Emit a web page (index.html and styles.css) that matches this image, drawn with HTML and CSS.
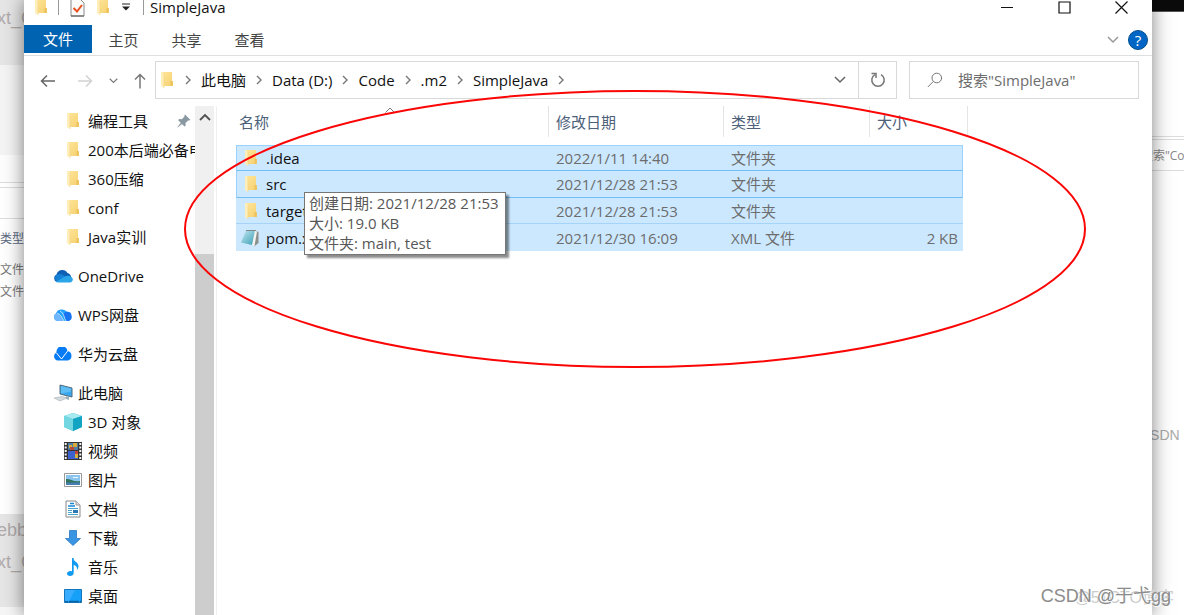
FILE: index.html
```html
<!DOCTYPE html>
<html lang="zh-CN">
<head>
<meta charset="utf-8">
<meta name="viewport" content="width=device-width, initial-scale=1">
<title>SimpleJava</title>
<link rel="stylesheet" href="styles.css">
</head>
<body>
<svg class="sprite" aria-hidden="true">
  <defs>
    <linearGradient id="gold" x1="0" x2="1" y1="0" y2="1"><stop offset="0" stop-color="#ffe69a"/><stop offset="1" stop-color="#f5d070"/></linearGradient>
    <linearGradient id="sky" x1="0" x2="1" y1="0" y2="1"><stop offset="0" stop-color="#2b98ff"/><stop offset="1" stop-color="#16b0fb"/></linearGradient>
    <linearGradient id="note" x1="0" x2="1" y1="0" y2="1"><stop offset="0" stop-color="#c4e8f0"/><stop offset="1" stop-color="#3a9fb8"/></linearGradient>
    <symbol id="folder" viewBox="0 0 12 16"><path d="M1 0h10v9h.800v5H2z" fill="url(#gold)"/><path d="M9.500 9h2.300v5H9.500z" fill="#edc25c"/><path d="M0 0l3 1.500V16l-3-2z" fill="#ffeeb8"/><path d="M3 2v14" stroke="#efd084" stroke-width=".6"/></symbol>
    <symbol id="chev-r" viewBox="0 0 6 10"><path d="M1 1l4 4-4 4" fill="none" stroke="currentColor" stroke-width="1.400"/></symbol>
    <symbol id="chev-d" viewBox="0 0 12 8"><path d="M1 1l5 5 5-5" fill="none" stroke="currentColor" stroke-width="1.500"/></symbol>
  </defs>
</svg>

<div class="desktop">
  <aside class="strip strip-left" aria-hidden="true">
    <div class="code-block code-top">xt_C</div>
    <div class="band band-gray"></div>
    <div class="band band-light"></div>
    <div class="band band-line"></div>
    <div class="band band-path"></div>
    <div class="strip-heading">类型</div>
    <div class="strip-cell">文件</div>
    <div class="strip-cell">文件</div>
    <div class="band band-blank"></div>
    <div class="code-block code-bottom"><span>ebb</span><span>xt_C</span></div>
    <div class="band band-rest"></div>
  </aside>

  <main class="window">
    <header class="titlebar">
      <div class="quick">
        <svg width="12" height="16"><use href="#folder"/></svg>
        <i class="rule"></i>
        <button class="plain" aria-label="属性"><svg width="16" height="19" viewBox="0 0 16 19"><path d="M1 1h9l4 4v13H1z" fill="#fbfbfb" stroke="#8a8a8a"/><path d="M1 18h13" stroke="#555"/><path d="M3.500 10l3.500 3.500L12 7" fill="none" stroke="#e8501e" stroke-width="2"/></svg></button>
        <button class="plain" aria-label="新建文件夹"><svg width="12" height="16"><use href="#folder"/></svg></button>
        <button class="plain quick-more" aria-label="自定义"><svg width="8" height="8" viewBox="0 0 8 8"><path d="M0 1h8" stroke="#222"/><path d="M0 3.500h8L4 7.500z" fill="#222"/></svg></button>
        <i class="rule"></i>
      </div>
      <h1 class="title">SimpleJava</h1>
      <div class="controls">
        <button aria-label="最小化"><svg width="13" height="13"><path d="M0 6.500h12" stroke="#111"/></svg></button>
        <button aria-label="最大化"><svg width="13" height="13"><path d="M1 1h11v11H1z" fill="none" stroke="#111" stroke-width="1.200"/></svg></button>
        <button aria-label="关闭"><svg width="13" height="13"><path d="M.5.5l12 12M12.500.5l-12 12" stroke="#111" stroke-width="1.200"/></svg></button>
      </div>
    </header>

    <nav class="ribbon">
      <button class="tab tab-file">文件</button>
      <button class="tab">主页</button>
      <button class="tab">共享</button>
      <button class="tab">查看</button>
      <div class="ribbon-end">
        <button class="plain expand" aria-label="展开功能区"><svg width="12" height="8"><use href="#chev-d"/></svg></button>
        <button class="help" aria-label="帮助">?</button>
      </div>
    </nav>

    <div class="toolbar">
      <div class="history">
        <button class="plain" aria-label="后退"><svg width="16" height="14" viewBox="0 0 16 14"><path d="M15 7H1.500M7 1.500L1.500 7 7 12.500" fill="none" stroke="#666" stroke-width="1.500"/></svg></button>
        <button class="plain" aria-label="前进"><svg width="16" height="14" viewBox="0 0 16 14"><path d="M1 7h13.500M9 1.500L14.500 7 9 12.500" fill="none" stroke="#d2d2d2" stroke-width="1.500"/></svg></button>
        <button class="plain recent" aria-label="最近浏览的位置"><svg width="9" height="6"><use href="#chev-d"/></svg></button>
        <button class="plain" aria-label="上移"><svg width="12" height="16" viewBox="0 0 12 16"><path d="M6 15.500V1.500M1 6.500l5-5 5 5" fill="none" stroke="#777" stroke-width="1.500"/></svg></button>
      </div>
      <div class="address">
        <svg width="12" height="16"><use href="#folder"/></svg>
        <nav class="crumbs">
          <svg width="6" height="10"><use href="#chev-r"/></svg><a href="#">此电脑</a>
          <svg width="6" height="10"><use href="#chev-r"/></svg><a href="#">Data (D:)</a>
          <svg width="6" height="10"><use href="#chev-r"/></svg><a href="#">Code</a>
          <svg width="6" height="10"><use href="#chev-r"/></svg><a href="#">.m2</a>
          <svg width="6" height="10"><use href="#chev-r"/></svg><a href="#">SimpleJava</a>
          <svg width="6" height="10"><use href="#chev-r"/></svg>
        </nav>
        <button class="plain addr-btn" aria-label="历史记录"><svg width="12" height="8"><use href="#chev-d"/></svg></button>
        <button class="plain addr-btn refresh" aria-label="刷新"><svg width="16" height="16" viewBox="0 0 16 16"><path d="M11 2.600A6.200 6.200 0 1 1 5 2.600" fill="none" stroke="#777" stroke-width="1.500"/><path d="M1.500 1.500h4.500v4.500" fill="none" stroke="#777" stroke-width="1.500"/></svg></button>
      </div>
      <label class="search">
        <svg width="16" height="16" viewBox="0 0 16 16"><circle cx="9.800" cy="6" r="4.800" fill="none" stroke="#777"/><path d="M6.300 9.500L.8 15" stroke="#777"/></svg>
        <input type="text" aria-label="搜索" placeholder="搜索&quot;SimpleJava&quot;">
      </label>
    </div>

    <div class="body">
      <nav class="tree">
        <ul class="group sub">
          <li><a href="#"><span class="ico"><svg width="12" height="16"><use href="#folder"/></svg></span>编程工具<svg class="pin" width="14" height="14" viewBox="0 0 14 14"><path d="M8 .5l5.500 5.500-1.500.6-.9-.2-2.600 2.600.2 2.500-1.200 1L5 10 .8 13.400.5 13l3.300-4.200L1.200 6.200l1-1.200 2.600.2 2.700-2.600-.2-.9z" fill="#8a98a2"/></svg></a></li>
          <li><a href="#"><span class="ico"><svg width="12" height="16"><use href="#folder"/></svg></span>200本后端必备电子书</a></li>
          <li><a href="#"><span class="ico"><svg width="12" height="16"><use href="#folder"/></svg></span>360压缩</a></li>
          <li><a href="#"><span class="ico"><svg width="12" height="16"><use href="#folder"/></svg></span>conf</a></li>
          <li><a href="#"><span class="ico"><svg width="12" height="16"><use href="#folder"/></svg></span>Java实训</a></li>
        </ul>
        <ul class="group">
          <li><a href="#"><span class="ico"><svg width="20" height="14" viewBox="0 0 20 14"><path d="M4 13a4 4 0 0 1-.5-7.500A6 6 0 0 1 14.500 4 5 5 0 0 1 16 13z" fill="#0f5fb5"/><path d="M4 5.500C8 4 11 6 13 8l5 4.500H4A4 4 0 0 1 4 5.500z" fill="#1480d6"/><path d="M3 12.800L12 7.500c3-1.800 7-.5 7.800 2.500.4 1.800-1 3.500-3 3.500H5c-.8 0-1.500-.3-2-.7z" fill="#2ba4e8"/></svg></span>OneDrive</a></li>
        </ul>
        <ul class="group">
          <li><a href="#"><span class="ico"><svg width="20" height="14" viewBox="0 0 20 14"><path d="M5 13a4 4 0 0 1-2-7.500A6 5.500 0 0 1 13.500 3.500 5 5 0 0 1 15 13z" fill="url(#sky)"/><path d="M2 6c4-1.500 7 3 8.500 7H5A4.200 4.200 0 0 1 2 6z" fill="#70b7ff"/><path d="M10.500 8a4 4 0 0 1 8-.5c1 3-1 5.500-3.500 5.500h-2z" fill="#1974f2"/><path d="M4 5.500c4 .5 5 4.500 7 7.500M7 3c4 2 4 7 6 10" fill="none" stroke="#e2f1ff" stroke-width=".8"/></svg></span>WPS网盘</a></li>
        </ul>
        <ul class="group">
          <li><a href="#"><span class="ico"><svg width="20" height="14" viewBox="0 0 20 14"><path d="M5 13.500a4.200 4.200 0 0 1-1.500-8A5.500 5.500 0 0 1 14.500 4a4.900 4.900 0 0 1 .5 9.500z" fill="#087cf5"/><path d="M3.500 6l5 6L15 3.500" fill="none" stroke="#fff" stroke-width="1"/></svg></span>华为云盘</a></li>
        </ul>
        <ul class="group">
          <li><a href="#"><span class="ico"><svg width="20" height="18" viewBox="0 0 20 18"><path d="M7 1l12 3v9L7 10z" fill="#3aa8ef" stroke="#526b7a"/><path d="M8 2l10 2.500v3L8 9.400z" fill="#5fbdf6"/><path d="M13 12v3l3 1v-3z" fill="#9fb0ba"/><path d="M1 14l8-1.500 5 1.500-7 3z" fill="#d4dadd" stroke="#a6b0b5" stroke-width=".6"/></svg></span>此电脑</a>
            <ul class="sub">
              <li><a href="#"><span class="ico"><svg width="18" height="18" viewBox="0 0 18 18"><path d="M0 3l9-3 9 3v11l-9 4-9-4z" fill="#38bdd2"/><path d="M0 3l9-3 9 3-9 3z" fill="#a6eaf0"/><path d="M0 3l9 3v12l-9-4z" fill="#73d7e2"/><path d="M9 6l9-3v11l-9 4z" fill="#13a4c3"/></svg></span>3D 对象</a></li>
              <li><a href="#"><span class="ico"><svg width="18" height="18" viewBox="0 0 18 18"><path d="M0 0h18v18H0z" fill="#333"/><path d="M4 1h10v7H4z" fill="#4e7da8"/><path d="M4 9h10v8H4z" fill="#3c62ce"/><path d="M5 3h3v3H5zM9 1h4v4H9z" fill="#d8ab3b"/><path d="M6 5h4v3H6z" fill="#b64a3a"/><path d="M11 9h3v3h-3z" fill="#c5423c"/><path d="M11 12h3v4h-3z" fill="#d6b13c"/><path d="M1.700 1v17M16.300 1v17" stroke="#f5f5f5" stroke-width="2" stroke-dasharray="2 1.500"/></svg></span>视频</a></li>
              <li><a href="#"><span class="ico"><svg width="18" height="14" viewBox="0 0 18 14"><path d="M.5.5h17v13H.5z" fill="#fff" stroke="#999"/><path d="M2 2h14v10H2z" fill="#8bc4ef"/><path d="M2 6c4-.5 7 3 14 2v2H2z" fill="#31745e"/><path d="M2 9.500h14V12H2z" fill="#477db0"/><path d="M9 4h5v1H9z" fill="#edf8ff"/></svg></span>图片</a></li>
              <li><a href="#"><span class="ico"><svg width="16" height="18" viewBox="0 0 16 18"><path d="M1 1h10l4 4v12H1z" fill="#fff" stroke="#888"/><path d="M11 1v4h4" fill="#ddd" stroke="#999"/><path d="M5 3.500h4M3 6h7" stroke="#1686d9" stroke-width="1.500"/><path d="M3 8.500h10M3 10.500h4M3 12.500h4M3 14.500h10" stroke="#4ba8cc"/><path d="M8 10h5v3H8z" fill="#2d7ab5"/></svg></span>文档</a></li>
              <li><a href="#"><span class="ico"><svg width="16" height="16" viewBox="0 0 16 16"><path d="M4.500.5h7v8h4L8 15.500.5 8.500h4z" fill="#3994e2" stroke="#2879c4" stroke-width=".8"/></svg></span>下载</a></li>
              <li><a href="#"><span class="ico"><svg width="12" height="18" viewBox="0 0 12 18"><path d="M5 0h1.500c0 4 5 4 5 8 0 1.500-.5 2.500-1.500 4 .3-3-1-4.500-3.300-5v8c0 2-1.700 3-3.700 3-1.800 0-3-1-3-2.500S1.500 13 3.500 13L5 13.200z" fill="#109bf1"/></svg></span>音乐</a></li>
              <li><a href="#"><span class="ico"><svg width="18" height="14" viewBox="0 0 18 14"><path d="M.5.5h17v13H.5z" fill="#16a0f8" stroke="#1576bd"/><path d="M1 12.500h16" stroke="#0b64a8" stroke-width="1.500" stroke-dasharray="3 1 10 1"/><path d="M1 1h10L5 12H1z" fill="#38adff"/></svg></span>桌面</a></li>
            </ul>
          </li>
        </ul>
      </nav>
      <div class="scrollbar" aria-hidden="true">
        <svg width="12" height="8" viewBox="0 0 12 8"><path d="M1 7l5-5 5 5" fill="none" stroke="#505050" stroke-width="1.800"/></svg>
        <div class="thumb"></div>
      </div>

      <section class="pane">
        <table class="files">
          <colgroup><col class="c-name"><col class="c-date"><col class="c-type"><col class="c-size"><col class="c-edge"></colgroup>
          <thead>
            <tr><th>名称<svg class="sort" width="10" height="6" viewBox="0 0 10 6"><path d="M.5 5.500L5 1l4.500 4.500" fill="none" stroke="#777"/></svg></th><th>修改日期</th><th>类型</th><th colspan="2">大小</th></tr>
          </thead>
          <tbody>
            <tr class="picked"><td><span class="name"><svg width="12" height="16"><use href="#folder"/></svg>.idea</span></td><td>2022/1/11 14:40</td><td>文件夹</td><td></td></tr>
            <tr class="picked tall"><td><span class="name"><svg width="12" height="16"><use href="#folder"/></svg>src</span></td><td>2021/12/28 21:53</td><td>文件夹</td><td></td></tr>
            <tr><td><span class="name"><svg width="12" height="16"><use href="#folder"/></svg>target</span></td><td>2021/12/28 21:53</td><td>文件夹</td><td></td></tr>
            <tr class="last tall"><td><span class="name file"><svg width="18" height="18" viewBox="0 0 18 18"><path d="M14 1.500l3.500 1.500v11L13 17.500z" fill="#8b8f8c"/><path d="M13 1.500l3 1-2.500 14.500L10 15.500z" fill="#f4f4ee"/><path d="M5 1.500h9L11 16 0 13.500z" fill="url(#note)"/><path d="M5 1.500h10" stroke="#7d8a8c"/></svg>pom.xml</span></td><td>2021/12/30 16:09</td><td>XML 文件</td><td>2 KB</td></tr>
          </tbody>
        </table>
        <div class="tooltip" role="tooltip">
          <div>创建日期: 2021/12/28 21:53</div>
          <div>大小: 19.0 KB</div>
          <div>文件夹: main, test</div>
        </div>
      </section>
    </div>
  </main>

  <aside class="strip strip-right" aria-hidden="true">
    <div class="black"></div>
    <div class="gap-top"></div>
    <div class="behind-search">搜索"Co</div>
    <div class="behind-mark">CSDN @</div>
  </aside>

  <svg class="annotation" width="904" height="282" viewBox="0 0 904 282" aria-hidden="true"><ellipse cx="452" cy="141" rx="450" ry="138" fill="none" stroke="#fb0505" stroke-width="2"/></svg>
  <div class="mark mark-back">@51CTO博客</div>
  <div class="mark mark-front">CSDN @于弋gg</div>
</div>
</body>
</html>
```
FILE: styles.css
```css
* { box-sizing: border-box; }
body {
  margin: 0;
  font: 15px/20px "Open Sans", "Noto Sans CJK SC", sans-serif;
  color: #111;
  background: #fff;
}
svg { display: block; flex: none; }
button { font: inherit; color: inherit; border: 0; background: none; padding: 0; }
a { color: inherit; text-decoration: none; }
ul { list-style: none; margin: 0; padding: 0; }
.sprite { position: absolute; width: 0; height: 0; }
.plain { display: flex; align-items: center; justify-content: center; }

.desktop {
  position: relative;
  display: grid;
  grid-template-columns: 24px minmax(0, 1fr) 32px;
  height: 100vh;
  overflow: hidden;
}

/* Windows behind the explorer */
.strip { display: flex; flex-direction: column; overflow: hidden; white-space: nowrap; min-height: 0; }
.strip > * { flex: none; }
.code-block { background: #e6e6e6; color: #b2acac; font: 18px/32px "Liberation Sans", sans-serif; text-indent: -3px; }
.code-top { height: 65px; padding-top: 2px; }
.band-gray { height: 90px; background: #f4f4f4; }
.band-light { height: 28px; background: #fdfdfd; border-bottom: 1px solid #ddd; }
.band-line { height: 5px; border-bottom: 1px solid #ddd; }
.band-path { height: 31px; border-bottom: 1px solid #ddd; }
.strip-heading, .strip-cell { font-size: 12px; line-height: 22px; color: #777; }
.strip-heading { line-height: 40px; color: #5d6b84; }
.band-blank { height: 211px; }
.code-block.code-bottom { display: flex; flex-direction: column; height: 93px; }
.band-rest { height: 8px; background: #f6f6f6; }
.black { height: 12px; background: #0b0b0b; border-bottom: 1px solid #555; }
.gap-top { height: 128px; border-bottom: 4px double #ddd; }
.behind-search { height: 31px; border-bottom: 1px solid #ddd; font-size: 12px; line-height: 31px; color: #888; text-indent: -11px; }
.behind-mark { margin-top: 253px; font: 14px/22px "Liberation Sans", sans-serif; color: #aaa; text-indent: -12px; }

/* Explorer window */
.window {
  position: relative;
  display: flex;
  flex-direction: column;
  min-height: 0;
  background: #fff;
  box-shadow: 0 0 18px rgba(0, 0, 0, .5);
}
.titlebar { display: flex; align-items: center; height: 25px; padding-bottom: 11px; }
.quick { display: flex; align-items: center; padding-left: 11px; gap: 11px; }
.rule { width: 1px; height: 16px; background: #999; }
.quick-more { width: 12px; }
.title { margin: 0 0 0 6px; font-size: 15px; line-height: 16px; font-weight: 400; }
.controls { display: flex; margin-left: auto; padding-right: 2px; }
.controls button { display: flex; justify-content: center; width: 57px; }

.ribbon { display: flex; height: 31px; border-bottom: 1px solid #dfdfdf; color: #444; }
.tab { width: 63px; height: 30px; }
.tab-file { width: 68px; height: 28px; background: #0063b1; color: #fff; }
.ribbon-end { display: flex; align-items: center; gap: 9px; margin-left: auto; padding-right: 4px; }
.expand { color: #999; }
.help { width: 20px; height: 20px; border-radius: 50%; background: #0066c5; border: 1px solid #00508f; color: #fff; line-height: 18px; }

.toolbar { display: flex; align-items: center; height: 50px; padding: 0 13px 2px 16px; color: #666; }
.history { display: flex; align-items: center; gap: 16px; width: 115px; flex: none; padding-top: 2px; }
.history button:first-child { margin-right: 5px; }
.history .recent { color: #777; }
.address { display: flex; align-items: center; flex: 1; min-width: 0; height: 38px; border: 1px solid #d9d9d9; padding-left: 5px; }
.crumbs { display: flex; align-items: center; gap: 10px; margin-left: 12px; color: #777; white-space: nowrap; overflow: hidden; }
.crumbs a { color: #111; }
.addr-btn { width: 36px; height: 36px; margin-left: auto; flex: none; }
.refresh { width: 38px; margin-left: 0; border-left: 1px solid #d9d9d9; }
.search { display: flex; align-items: center; gap: 15px; width: 230px; height: 38px; margin-left: 12px; padding: 0 17px; border: 1px solid #d9d9d9; }
.search input { flex: 1; min-width: 0; border: 0; padding: 0; outline: 0; font: inherit; background: none; }
.search input::placeholder { color: #6d6d6d; opacity: 1; }

.body { display: flex; flex: 1; min-height: 0; }
.tree { width: 171px; flex: none; overflow: hidden; }
.group + .group { margin-top: 10px; }
.tree a { display: flex; align-items: center; gap: 5px; height: 29px; padding-left: 29px; white-space: nowrap; }
.tree .sub a { padding-left: 39px; }
.ico { display: flex; justify-content: center; width: 20px; flex: none; }
.pin { margin-left: auto; margin-right: 4px; }
.scrollbar { display: flex; flex-direction: column; align-items: center; width: 19px; flex: none; padding-top: 7px; background: #f0f0f0; }
.thumb { flex: 1; width: 100%; margin-top: 133px; background: #cdcdcd; }

.pane { position: relative; flex: 1; min-width: 0; margin-left: 2px; padding-left: 19px; border-left: 1px solid #f0f0f0; }
.files { table-layout: fixed; width: 732px; border-collapse: separate; border-spacing: 0; color: #6d6d6d; }
.c-name { width: 313px; }
.c-date { width: 175px; }
.c-type { width: 146px; }
.c-size { width: 93px; }
.c-edge { width: 5px; }
.files th { position: relative; height: 31px; padding: 0 7px; border-right: 1px solid #e5e5e5; font-weight: 400; text-align: left; color: #4c607a; }
.files th:first-child { padding-left: 3px; }
.sort { position: absolute; top: 1px; left: 149px; }
.files tbody::before { content: ""; display: table-row; height: 8px; }
.files td { height: 26px; padding: 0 7px; background: #cce8ff; line-height: 20px; border-bottom: 1px solid #a6d3f8; }
.files td:nth-child(4) { padding-right: 5px; text-align: right; }
.files .picked td { border-bottom-color: #72bdf5; }
.files .picked td:first-child { border-left: 1px solid #99d1ff; padding-left: 8px; }
.files .picked td:nth-child(4) { border-right: 1px solid #99d1ff; }
.files .picked:first-child td { border-top: 1px solid #99d1ff; }
.files .tall td { height: 27px; }
.files .last td { border-bottom: 0; }
.files td:first-child { padding-left: 9px; }
.name { display: flex; align-items: center; gap: 9px; color: #111; }
.files .last td:first-child { padding-left: 5px; }
.name.file { gap: 7px; }

.tooltip {
  position: absolute;
  top: 86px;
  left: 87px;
  padding: 0 6px 1px 4px;
  border: 1px solid #767676;
  background: #fff;
  color: #575757;
  box-shadow: 3px 3px 2px rgba(0, 0, 0, .45);
  white-space: nowrap;
}

/* Overlays */
.annotation { position: absolute; top: 88px; left: 183px; }
.mark { position: absolute; font-family: "Liberation Sans", "Noto Sans CJK SC", sans-serif; white-space: nowrap; text-shadow: 1px 1px 1px #fff; }
.mark-front { right: 13px; bottom: 6px; font-size: 18px; line-height: 26px; color: #8c8c8c; }
.mark-back { right: 10px; bottom: 4px; font-size: 16px; line-height: 26px; color: #ccc; }
```
